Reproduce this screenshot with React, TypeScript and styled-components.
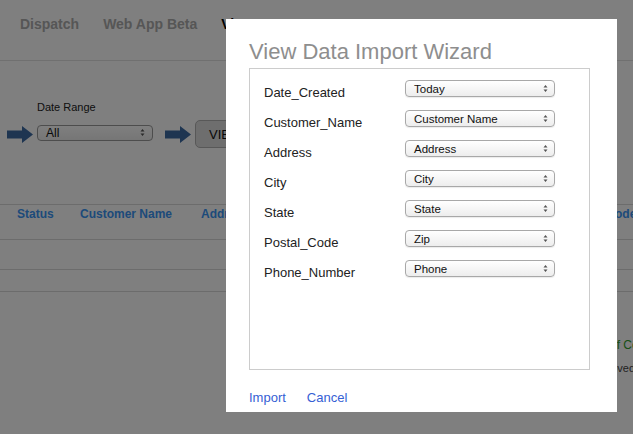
import React from "react";
import styled, { createGlobalStyle } from "styled-components";

const GlobalStyle = createGlobalStyle`
  html, body {
    margin: 0;
    padding: 0;
    background: #ffffff;
    font-family: "Liberation Sans", Arial, sans-serif;
    overflow: hidden;
  }
`;

const Page = styled.div`
  position: relative;
  width: 633px;
  height: 434px;
  overflow: hidden;
  background: #ffffff;
`;

const Nav = styled.div`
  display: flex;
  align-items: center;
  gap: 24px;
  height: 61px;
  box-sizing: border-box;
  padding: 0 0 13px 20px;
  border-bottom: 1px solid #e0e0e0;
`;

const NavItem = styled.span<{ $active?: boolean }>`
  font-size: 14px;
  font-weight: bold;
  white-space: nowrap;
  color: ${(p) => (p.$active ? "#000000" : "#acacac")};
`;

const FilterLabel = styled.div`
  font-size: 11px;
  line-height: 13px;
  color: #222;
  margin: 40px 0 6px 37px;
`;

const FilterRow = styled.div`
  display: flex;
  align-items: center;
  padding-left: 7px;
  height: 28px;
`;

const FilterSelect = styled.div`
  display: flex;
  align-items: center;
  justify-content: space-between;
  box-sizing: border-box;
  width: 116px;
  height: 16px;
  margin: 0 12px 3px 4px;
  padding: 0 7px 0 8px;
  border: 1px solid #9a9a9a;
  border-radius: 4px;
  background: linear-gradient(#ffffff, #ececec);
  font-size: 12px;
  color: #111;
`;

const ViewButton = styled.button`
  margin-left: 4px;
  width: 90px;
  height: 28px;
  box-sizing: border-box;
  border: 1px solid #b0b0b0;
  border-radius: 5px;
  background: #dcdcdc;
  font-family: "Liberation Sans", Arial, sans-serif;
  font-size: 13px;
  text-align: left;
  padding-left: 13px;
  color: #111;
`;

const Table = styled.div`
  margin-top: 56px;
  border-top: 1px solid #d8d8d8;
`;

const HeaderRow = styled.div`
  display: flex;
  height: 35px;
  box-sizing: border-box;
  align-items: flex-start;
  padding: 2px 0 0 17px;
  border-bottom: 1px solid #d8d8d8;
  white-space: nowrap;
`;

const HeaderCell = styled.span<{ $w: number }>`
  flex: 0 0 ${(p) => p.$w}px;
  font-size: 12px;
  line-height: 14px;
  font-weight: bold;
  color: #3a95f5;
`;

const BodyRow = styled.div<{ $h: number }>`
  height: ${(p) => p.$h}px;
  border-bottom: 1px solid #d8d8d8;
`;

const FooterNotes = styled.div`
  margin-top: 46px;
  white-space: nowrap;
`;

const FooterLine = styled.div<{ $indent: number; $green?: boolean }>`
  padding-left: ${(p) => p.$indent}px;
  font-size: ${(p) => (p.$green ? 12 : 11)}px;
  line-height: 14px;
  margin-bottom: 9px;
  color: ${(p) => (p.$green ? "#2fa02f" : "#444")};
`;

const Overlay = styled.div`
  position: absolute;
  inset: 0;
  background: rgba(0, 0, 0, 0.5);
`;

const Modal = styled.div`
  position: absolute;
  left: 226px;
  top: 19px;
  width: 391px;
  height: 393px;
  box-sizing: border-box;
  background: #ffffff;
  padding: 20px 27px 0 23px;
  display: flex;
  flex-direction: column;
`;

const Title = styled.h2`
  margin: 0;
  font-size: 22px;
  line-height: 26px;
  font-weight: normal;
  color: #8e8e8e;
`;

const FieldBox = styled.div`
  margin-top: 3px;
  height: 302px;
  box-sizing: border-box;
  border: 1px solid #cccccc;
  padding: 11px 0 0 14px;
`;

const FieldRow = styled.div`
  display: flex;
  align-items: flex-start;
  height: 30px;
`;

const FieldLabel = styled.span`
  flex: 0 0 141px;
  padding-top: 5px;
  font-size: 13px;
  line-height: 16px;
  color: #222;
`;

const SelectBox = styled.div`
  display: flex;
  align-items: center;
  justify-content: space-between;
  box-sizing: border-box;
  width: 150px;
  height: 17px;
  padding: 0 6px 0 8px;
  border: 1px solid #a8a8a8;
  border-radius: 4px;
  background: linear-gradient(#ffffff, #ededed);
  box-shadow: 0 1px 1px rgba(0, 0, 0, 0.08);
  font-size: 11.5px;
  color: #111;
`;

const Actions = styled.div`
  display: flex;
  gap: 21px;
  margin-top: 20px;
`;

const ActionLink = styled.a`
  font-size: 13px;
  line-height: 16px;
  color: #3560d4;
  cursor: pointer;
`;

const UpDown = () => (
  <svg width="5" height="9" viewBox="0 0 5 9">
    <path d="M0.5 3.5 L2.5 1 L4.5 3.5 Z M0.5 5.5 L2.5 8 L4.5 5.5 Z" fill="#555" />
  </svg>
);

const BlockArrow = () => (
  <svg width="26" height="17" viewBox="0 0 26 17">
    <path d="M0 4.5 H15 V0 L26 8.5 L15 17 V12.5 H0 Z" fill="#3d6aa3" />
  </svg>
);

const fields = [
  ["Date_Created", "Today"],
  ["Customer_Name", "Customer Name"],
  ["Address", "Address"],
  ["City", "City"],
  ["State", "State"],
  ["Postal_Code", "Zip"],
  ["Phone_Number", "Phone"],
];

const App = () => {
  return (
    <Page>
      <GlobalStyle />
      <Nav>
        <NavItem>Dispatch</NavItem>
        <NavItem>Web App Beta</NavItem>
        <NavItem $active>View Data</NavItem>
      </Nav>
      <FilterLabel>Date Range</FilterLabel>
      <FilterRow>
        <BlockArrow />
        <FilterSelect>
          All
          <UpDown />
        </FilterSelect>
        <BlockArrow />
        <ViewButton>VIEW</ViewButton>
      </FilterRow>
      <Table>
        <HeaderRow>
          <HeaderCell $w={63}>Status</HeaderCell>
          <HeaderCell $w={121}>Customer Name</HeaderCell>
          <HeaderCell $w={99}>Address</HeaderCell>
          <HeaderCell $w={120}>City</HeaderCell>
          <HeaderCell $w={147}>State</HeaderCell>
          <HeaderCell $w={120}>Postal Code</HeaderCell>
        </HeaderRow>
        <BodyRow $h={29} />
        <BodyRow $h={21} />
      </Table>
      <FooterNotes>
        <FooterLine $indent={574} $green>
          Terms of Conditions
        </FooterLine>
        <FooterLine $indent={588}>Approved</FooterLine>
      </FooterNotes>
      <Overlay />
      <Modal>
        <Title>View Data Import Wizard</Title>
        <FieldBox>
          {fields.map(([label, value]) => (
            <FieldRow key={label}>
              <FieldLabel>{label}</FieldLabel>
              <SelectBox>
                {value}
                <UpDown />
              </SelectBox>
            </FieldRow>
          ))}
        </FieldBox>
        <Actions>
          <ActionLink>Import</ActionLink>
          <ActionLink>Cancel</ActionLink>
        </Actions>
      </Modal>
    </Page>
  );
};

export default App;
